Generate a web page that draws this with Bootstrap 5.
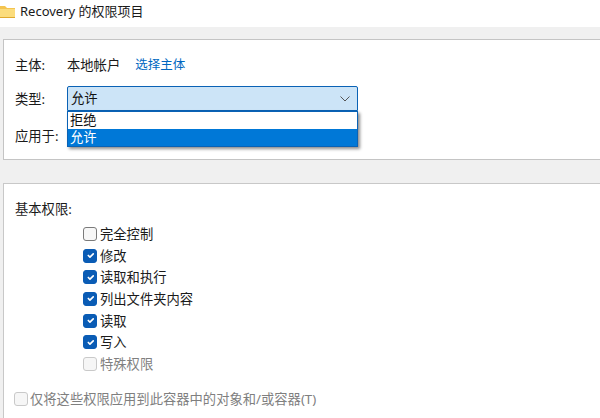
<!DOCTYPE html>
<html lang="zh-CN">
<head>
<meta charset="utf-8">
<title>Recovery 的权限项目</title>
<link href="https://cdn.jsdelivr.net/npm/bootstrap@5.3.0/dist/css/bootstrap.min.css" rel="stylesheet">
<style>
html,body{width:600px;height:418px;overflow:hidden}
body{background:#f0f0f0;font-family:"Noto Sans","Noto Sans CJK SC",sans-serif;font-size:13.3px;line-height:18px;color:#1a1a1a}
.titlebar{height:27px;background:#fff;gap:4px;padding-bottom:5px}
.titlebar span{font-size:13px}
.folder{width:16px;height:13px;display:block}
.panel-a{margin:12px 0 0 3px;height:121px;background:#fff;border:1px solid #c4c4c4;border-right:0;padding:16px 0 0 11px}
.panel-b{margin:23px 0 0 3px;height:235px;background:#fff;border:1px solid #c8c8c8;border-right:0;border-bottom:0;padding:16px 0 0 11px}
.lbl{width:52px;flex:none}
.rowa{height:18px}
.linkish{color:#0067c0;margin-left:15px;font-size:12.5px}
.combo{position:relative;width:291px;height:25px;background:#cce4f7;border:1px solid #0a62b5;border-radius:2px 2px 0 0;padding:2px 0 0 3px;color:#111}
.chev{position:absolute;right:7px;top:9px;width:10px;height:6px}
.droplist{position:absolute;left:-1px;top:24px;width:291px;background:#fff;border:1px solid #0a62b5;box-shadow:2px 2px 3px rgba(0,0,0,.45);z-index:5}
.opt{height:17px;line-height:16px;padding-left:2px;color:#111}
.opt-sel{background:#0078d7;color:#fff}
.perm-list{margin:5px 0 0 68px}
.perm{height:21.7px;display:flex;align-items:center;gap:3px}
.perm .form-check-input{width:14px;height:14px;margin:0;border-radius:3px;border:1px solid #7a7a7a;background-color:#f7f7f7;flex:none;opacity:1}
.perm .form-check-input:checked{background-color:#0a5cb5;border-color:#0a5cb5;background-size:11px}
.perm .form-check-input:disabled{border-color:#c9c9c9;background-color:#f6f6f6;opacity:1}
.off{color:#7f7f7f}
.only{margin:13px 0 0 -1px;gap:2px}
</style>
</head>
<body>
<div class="titlebar d-flex align-items-center">
<svg class="folder" viewBox="0 0 16 13"><path d="M-1 1h6l2 2h8v9H-1z" fill="#f4c44f"/><path d="M-1 4h16v8.500H-1z" fill="#fbdc7c"/><path d="M-1 12h16v1H-1z" fill="#e0a92e"/></svg>
<span>Recovery 的权限项目</span>
</div>
<div class="panel-a">
<div class="d-flex rowa"><div class="lbl">主体:</div><div>本地帐户</div><a class="linkish text-decoration-none">选择主体</a></div>
<div class="d-flex align-items-center mt-2 pt-1">
<div class="lbl">类型:</div>
<div class="combo">允许
<svg class="chev" viewBox="0 0 10 6"><path d="M.5.5 5 5 9.500.5" fill="none" stroke="#555" stroke-width="1"/></svg>
<div class="droplist"><div class="opt">拒绝</div><div class="opt opt-sel">允许</div></div>
</div>
</div>
<div class="d-flex rowa mt-3"><div class="lbl">应用于:</div></div>
</div>
<div class="panel-b">
<div>基本权限:</div>
<div class="perm-list">
<label class="perm"><input class="form-check-input" type="checkbox">完全控制</label>
<label class="perm"><input class="form-check-input" type="checkbox" checked>修改</label>
<label class="perm"><input class="form-check-input" type="checkbox" checked>读取和执行</label>
<label class="perm"><input class="form-check-input" type="checkbox" checked>列出文件夹内容</label>
<label class="perm"><input class="form-check-input" type="checkbox" checked>读取</label>
<label class="perm"><input class="form-check-input" type="checkbox" checked>写入</label>
<label class="perm off"><input class="form-check-input" type="checkbox" disabled>特殊权限</label>
</div>
<label class="perm off only"><input class="form-check-input" type="checkbox" disabled>仅将这些权限应用到此容器中的对象和/或容器(T)</label>
</div>
<script src="https://cdn.jsdelivr.net/npm/bootstrap@5.3.0/dist/js/bootstrap.bundle.min.js"></script>
</body>
</html>
